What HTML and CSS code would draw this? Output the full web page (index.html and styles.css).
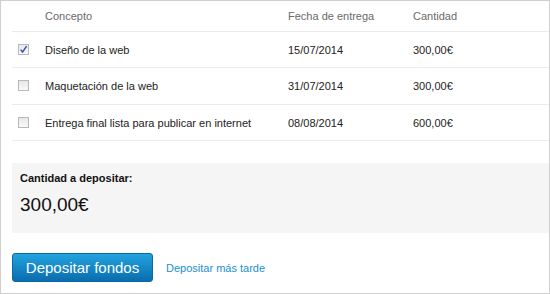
FILE: index.html
```html
<!DOCTYPE html>
<html lang="es">
<head>
<meta charset="utf-8">
<link rel="stylesheet" href="styles.css">
</head>
<body>
<div class="frame">
  <div class="table">
    <div class="row head">
      <div class="cell"></div>
      <div class="cell">Concepto</div>
      <div class="cell">Fecha de entrega</div>
      <div class="cell">Cantidad</div>
    </div>
    <div class="row">
      <div class="cell"><span class="cb"><svg viewBox="0 0 9 9" width="9" height="9"><path d="M1.6 4.6 L3.6 7 L7.6 1.2" fill="none" stroke="#2b50b8" stroke-width="1.4"/></svg></span></div>
      <div class="cell">Diseño de la web</div>
      <div class="cell">15/07/2014</div>
      <div class="cell">300,00€</div>
    </div>
    <div class="row tall">
      <div class="cell"><span class="cb"></span></div>
      <div class="cell">Maquetación de la web</div>
      <div class="cell">31/07/2014</div>
      <div class="cell">300,00€</div>
    </div>
    <div class="row">
      <div class="cell"><span class="cb"></span></div>
      <div class="cell">Entrega final lista para publicar en internet</div>
      <div class="cell">08/08/2014</div>
      <div class="cell">600,00€</div>
    </div>
  </div>
  <div class="summary">
    <div class="label">Cantidad a depositar:</div>
    <div class="amount">300,00€</div>
  </div>
  <div class="actions">
    <button class="btn">Depositar fondos</button>
    <a class="later" href="#">Depositar más tarde</a>
  </div>
</div>
</body>
</html>
```

FILE: styles.css
```css
html, body {
  margin: 0;
  padding: 0;
  background: #fff;
}
body {
  font-family: "Liberation Sans", Arial, sans-serif;
  font-size: 11px;
  color: #222;
}
.frame {
  width: 550px;
  height: 294px;
  box-sizing: border-box;
  border: 1px solid #cfcfcf;
  padding: 0 0 0 11px;
  display: flex;
  flex-direction: column;
}
.table {
  display: flex;
  flex-direction: column;
}
.row {
  display: grid;
  grid-template-columns: 33px 243px 125px 1fr;
  align-items: center;
  height: 35px;
  border-bottom: 1px solid #ebebeb;
}
.row.tall {
  height: 36px;
}
.row.head {
  height: 30px;
  color: #6a6a6a;
}
.cell {
  line-height: 14px;
}
.cb {
  display: block;
  width: 9px;
  height: 9px;
  margin-left: 6px;
  margin-top: -1px;
  border: 1px solid #b8b8b8;
  background: linear-gradient(#e8e8e8, #f9f9f9);
  position: relative;
}
.cb svg {
  position: absolute;
  left: 0;
  top: 0;
}
.summary {
  margin-top: 22px;
  background: #f5f5f5;
  height: 70px;
  box-sizing: border-box;
  padding: 8px 8px 0 8px;
}
.label {
  font-weight: bold;
  line-height: 14px;
  color: #111;
}
.amount {
  margin-top: 9px;
  font-size: 19px;
  line-height: 22px;
  color: #111;
}
.actions {
  margin-top: 20px;
  display: flex;
  align-items: center;
}
.btn {
  width: 141px;
  height: 29px;
  box-sizing: border-box;
  border: 1px solid #0b6aa6;
  border-radius: 3px;
  background: linear-gradient(#22a3df, #0a6dae);
  color: #fff;
  font-family: "Liberation Sans", Arial, sans-serif;
  font-size: 15px;
  padding: 0;
  line-height: 27px;
}
.later {
  margin-left: 13px;
  color: #1a8fd0;
  text-decoration: none;
  font-size: 11px;
}
```
